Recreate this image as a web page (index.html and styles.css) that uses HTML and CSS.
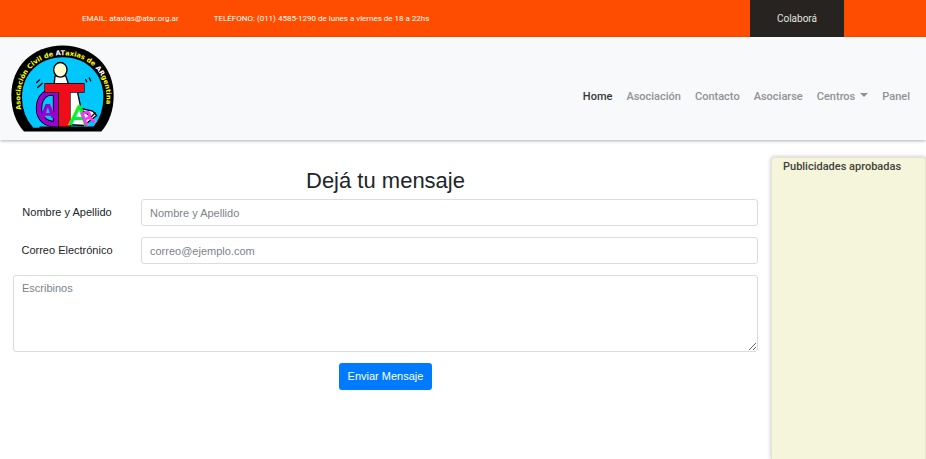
FILE: index.html
```html
<!DOCTYPE html>
<html lang="es">
<head>
<meta charset="utf-8">
<meta name="viewport" content="width=device-width, initial-scale=1">
<title>ATAR - Contacto</title>
<link rel="stylesheet" href="styles.css">
</head>
<body>
<div class="topbar">
  <span>EMAIL: ataxias@atar.org.ar</span>
  <span>TELÉFONO: (011) 4585-1290 de lunes a viernes de 18 a 22hs</span>
  <a class="donate" href="#">Colaborá</a>
</div>
<header class="header">
  <a class="brand" href="#" aria-label="ATAR">
    <svg class="logo" viewBox="33 28 309 260">
      <defs><path id="arch" d="M64 221C44 119 110 58 189 58S338 119 315 226L312 240"/></defs>
      <path d="M72 287Q34 244 34 178C34 92 98 29 188 29S341 92 341 178Q341 244 304 287Z" fill="#000"/>
      <path d="M100 276Q66 238 66 184C66 113 118 64 189 64S310 113 310 184Q310 238 278 276Z" fill="#00c8ff"/>
      <text class="motto"><textPath href="#arch">Asociación Civil de <tspan class="hl">AT</tspan>axias de <tspan class="hl">AR</tspan>gentina</textPath></text>
      <g stroke="#000" stroke-width="4" stroke-linecap="round" stroke-linejoin="round">
        <path d="M165 120L162 150H207L197 120Z" fill="#fff"/>
        <path d="M197 164L232 166L243 218L278 226L290 239L251 269L200 266Z" fill="#fff"/>
        <path d="M110 140L119 132M113 155L127 142M257 131L260 138M268 126L272 135" fill="none"/>
        <ellipse cx="181" cy="102" rx="20" ry="22" fill="#ffffd2"/>
        <path d="M247 224L274 243L286 231" fill="none"/>
        <path d="M121 275H279" stroke-width="6"/>
      </g>
      <path d="M168 173C137 162 117 186 117 218C117 248 138 266 168 265Z" fill="none" stroke="#000" stroke-width="19"/>
      <path d="M168 173C137 162 117 186 117 218C117 248 138 266 168 265Z" fill="none" stroke="#9900d2" stroke-width="14"/>
      <text class="letter purple" x="121" y="248">A</text>
      <text class="letter red" x="134" y="274">T</text>
      <text class="letter green" x="206" y="266" transform="rotate(4 206 266)">A</text>
      <text class="letter pink" x="253" y="271" transform="rotate(-22 253 271)">R</text>
    </svg>
  </a>
  <nav class="nav">
    <a class="active" href="#">Home</a>
    <a href="#">Asociación</a>
    <a href="#">Contacto</a>
    <a href="#">Asociarse</a>
    <a class="dropdown" href="#">Centros</a>
    <a href="#">Panel</a>
  </nav>
</header>
<div class="page">
  <main class="content">
    <h1>Dejá tu mensaje</h1>
    <form>
      <div class="row">
        <label for="nombre">Nombre y Apellido</label>
        <input class="field" id="nombre" type="text" placeholder="Nombre y Apellido">
      </div>
      <div class="row">
        <label for="correo">Correo Electrónico</label>
        <input class="field" id="correo" type="email" placeholder="correo@ejemplo.com">
      </div>
      <textarea class="field message" aria-label="Mensaje" placeholder="Escribinos"></textarea>
      <button class="send" type="submit">Enviar Mensaje</button>
    </form>
  </main>
  <aside class="ads">Publicidades aprobadas</aside>
</div>
</body>
</html>
```
FILE: styles.css
```css
* { box-sizing: border-box; }

body {
  display: flex;
  flex-direction: column;
  min-height: 100vh;
  margin: 0;
  background: #fff;
  color: #212529;
  font: 11px/17px "Liberation Sans", Arial, sans-serif;
}

a { color: inherit; text-decoration: none; }

.topbar {
  display: flex;
  align-items: center;
  gap: 35px;
  padding: 0 82px;
  background: #ff4d00;
  color: #fff;
  font: 8px/37px Roboto, sans-serif;
}

.donate {
  margin-left: auto;
  padding: 0 27px;
  background: #272321;
  color: #e4e3e3;
  font-size: 10px;
}

.header {
  display: flex;
  align-items: center;
  justify-content: space-between;
  padding: 8px 16px 8px 11px;
  background: #f8f9fa;
  box-shadow: 0 1px 3px rgba(0, 0, 0, .3);
}

.logo { display: block; width: 103px; height: 87px; }

.motto { fill: #ff0; font: bold 20px "DejaVu Sans", sans-serif; }
.hl { fill: #fff; }
.letter { font-family: "DejaVu Sans", sans-serif; font-weight: bold; }
.purple { fill: #9900d2; font-size: 60px; }
.red { fill: #f00c18; font-size: 174px; stroke: #000; stroke-width: 4px; paint-order: stroke; }
.green { fill: #00f22d; font-family: "Liberation Sans", sans-serif; font-size: 84px; font-weight: normal; stroke: #00f22d; stroke-width: 3px; }
.pink { fill: #ff35f5; font-size: 54px; font-weight: normal; stroke: #ff35f5; stroke-width: 3px; }

.nav {
  display: flex;
  gap: 14px;
  padding-top: 16px;
  color: #909294;
  font: 500 11px/17px Roboto, sans-serif;
}

.nav .active { color: #343637; }

.dropdown::after {
  content: "";
  display: inline-block;
  margin-left: 5px;
  vertical-align: 3px;
  border: 4px solid transparent;
  border-top-color: currentColor;
  border-bottom: 0;
}

.page {
  display: flex;
  flex: 1;
  gap: 13px;
  padding: 17px 0 0 13px;
}

.content { flex: 1; padding-top: 10px; }

h1 {
  margin: 0 0 4px;
  font-size: 22px;
  font-weight: 500;
  line-height: 28px;
  text-align: center;
}

form { display: flex; flex-direction: column; gap: 11px; }

.row {
  display: grid;
  grid-template-columns: 108px 1fr;
  align-items: center;
  gap: 20px;
}

.row label { text-align: center; }

.field {
  width: 100%;
  height: 27px;
  padding: 4px 8px;
  border: 1px solid #dadde0;
  border-radius: 3px;
  background: #fff;
  color: #495057;
  font: inherit;
}

.field::placeholder { color: #7c838a; opacity: 1; }

.message { display: block; height: 77px; resize: vertical; }

.send {
  align-self: center;
  padding: 5px 9px;
  border: 0;
  border-radius: 3px;
  background: #007bff;
  color: #fff;
  font: inherit;
}

.ads {
  width: 155px;
  padding: 0 11px;
  border: 1px solid #e4e4cf;
  border-bottom: 0;
  border-radius: 3px 3px 0 0;
  background: #f5f5dc;
  box-shadow: 0 0 4px rgba(0, 0, 0, .25);
  color: #3f423a;
  font: 500 11px/17px Roboto, sans-serif;
}
```
